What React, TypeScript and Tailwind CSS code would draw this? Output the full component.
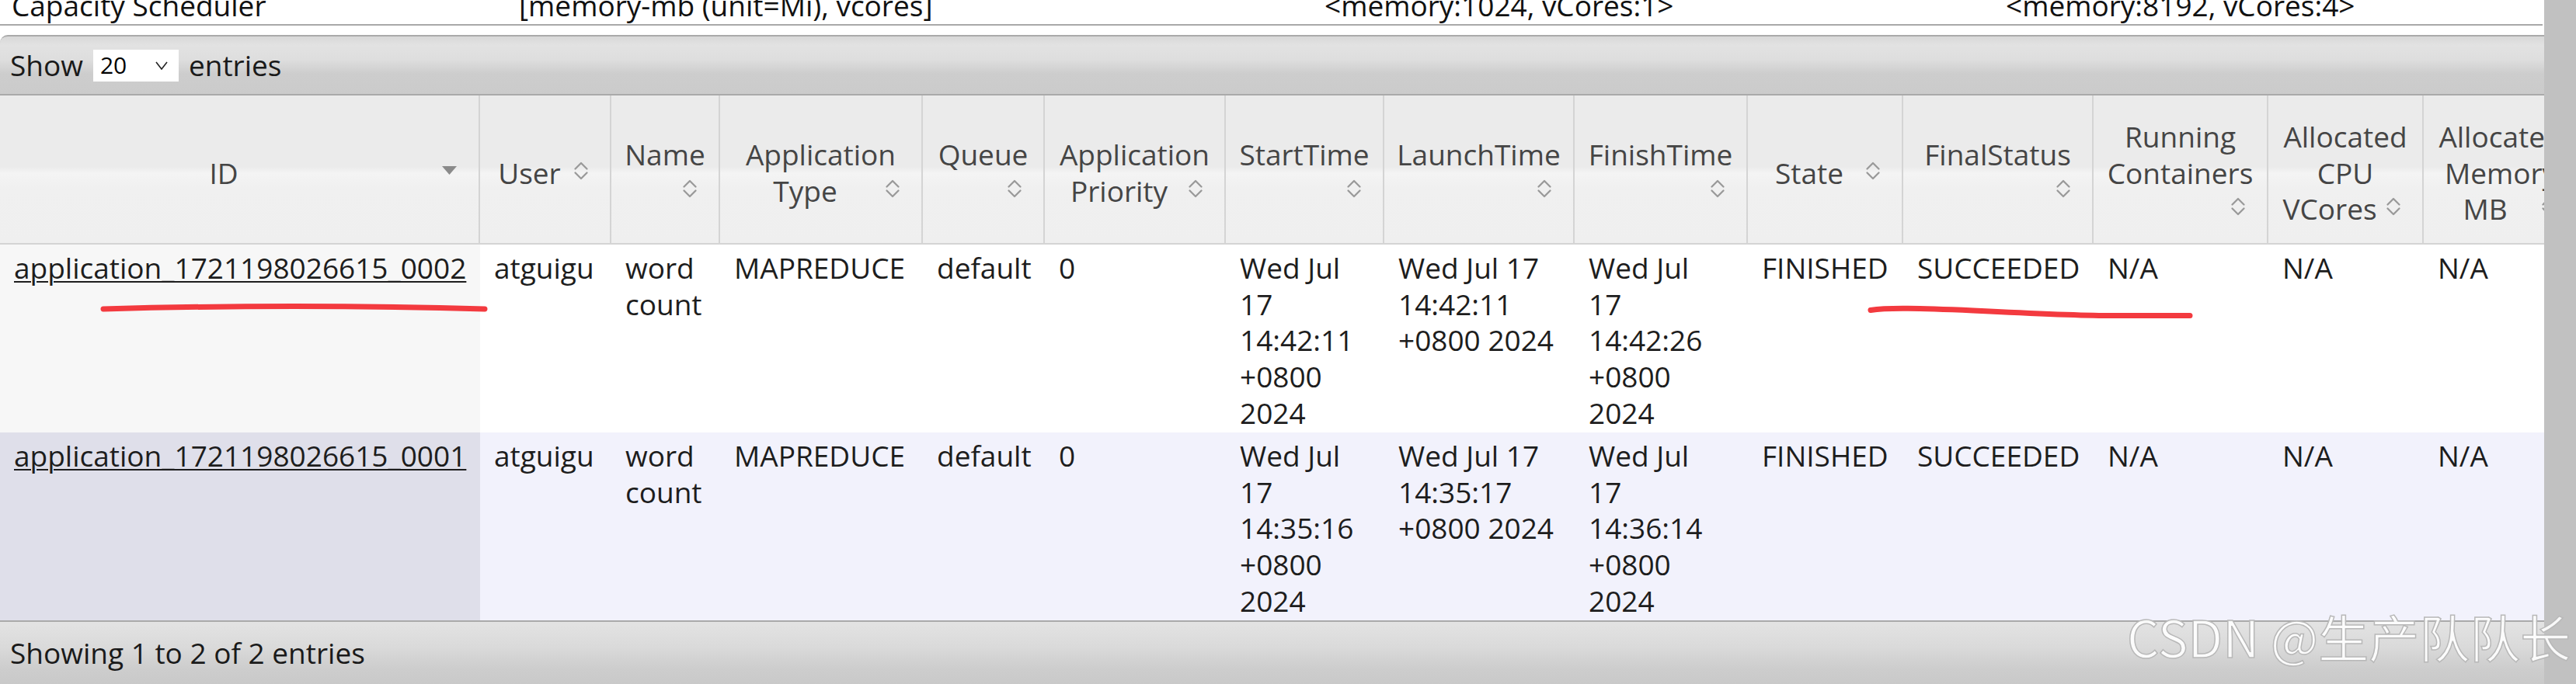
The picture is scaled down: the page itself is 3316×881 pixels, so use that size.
import React from "react";

type HeaderDef = { lines: string[]; mode: "inline" | "below"; icon: "tri" | "carets" };

const headers: HeaderDef[] = [
  { lines: ["ID"], mode: "inline", icon: "tri" },
  { lines: ["User"], mode: "inline", icon: "carets" },
  { lines: ["Name"], mode: "below", icon: "carets" },
  { lines: ["Application", "Type"], mode: "inline", icon: "carets" },
  { lines: ["Queue"], mode: "below", icon: "carets" },
  { lines: ["Application", "Priority"], mode: "inline", icon: "carets" },
  { lines: ["StartTime"], mode: "below", icon: "carets" },
  { lines: ["LaunchTime"], mode: "below", icon: "carets" },
  { lines: ["FinishTime"], mode: "below", icon: "carets" },
  { lines: ["State"], mode: "inline", icon: "carets" },
  { lines: ["FinalStatus"], mode: "below", icon: "carets" },
  { lines: ["Running", "Containers"], mode: "below", icon: "carets" },
  { lines: ["Allocated", "CPU", "VCores"], mode: "inline", icon: "carets" },
  { lines: ["Allocated", "Memory", "MB"], mode: "inline", icon: "carets" },
];

const rows: string[][][] = [
  [
    ["application_1721198026615_0002"],
    ["atguigu"],
    ["word", "count"],
    ["MAPREDUCE"],
    ["default"],
    ["0"],
    ["Wed Jul", "17", "14:42:11", "+0800", "2024"],
    ["Wed Jul 17", "14:42:11", "+0800 2024"],
    ["Wed Jul", "17", "14:42:26", "+0800", "2024"],
    ["FINISHED"],
    ["SUCCEEDED"],
    ["N/A"],
    ["N/A"],
    ["N/A"],
  ],
  [
    ["application_1721198026615_0001"],
    ["atguigu"],
    ["word", "count"],
    ["MAPREDUCE"],
    ["default"],
    ["0"],
    ["Wed Jul", "17", "14:35:16", "+0800", "2024"],
    ["Wed Jul 17", "14:35:17", "+0800 2024"],
    ["Wed Jul", "17", "14:36:14", "+0800", "2024"],
    ["FINISHED"],
    ["SUCCEEDED"],
    ["N/A"],
    ["N/A"],
    ["N/A"],
  ],
];

function Carets() {
  return (
    <svg width="20" height="26" viewBox="0 0 20 26" fill="none" stroke="#9a9a9a" strokeWidth="2.3" strokeLinecap="round" strokeLinejoin="round">
      <path d="M2.5 10.5L10 3L17.5 10.5" />
      <path d="M2.5 15.5L10 23L17.5 15.5" />
    </svg>
  );
}

function Tri() {
  return (
    <svg width="19" height="11" viewBox="0 0 19 11">
      <path d="M0 0H19L9.5 11Z" fill="#8a8a8a" />
    </svg>
  );
}

function Icon({ kind }: { kind: "tri" | "carets" }) {
  return kind === "tri" ? (
    <span className="block w-[40px] shrink-0 pl-[3px] pt-[14px]">
      <Tri />
    </span>
  ) : (
    <span className="block w-[40px] shrink-0 pl-[3px] pt-[7px]">
      <Carets />
    </span>
  );
}

function HeaderCell({ h }: { h: HeaderDef }) {
  return (
    <div className="flex h-[192px] flex-col justify-center border-b-2 border-r-2 border-[#d4d4d4] bg-[linear-gradient(to_bottom,#ebebeb_0px,#ebebeb_92px,#f4f4f4_100px,#f0f0f0_118px,#efefef_100%)] px-[10px] pt-[10px] text-[#454545]">
      {h.lines.map((l, i) =>
        i === h.lines.length - 1 && h.mode === "inline" ? (
          <div key={i} className="flex h-[46.7px]">
            <span className="flex-1 whitespace-nowrap text-center">{l}</span>
            <Icon kind={h.icon} />
          </div>
        ) : (
          <div key={i} className="h-[46.7px] whitespace-nowrap text-center">
            {l}
          </div>
        )
      )}
      {h.mode === "below" && (
        <div className="flex h-[46.7px] justify-end">
          <Icon kind={h.icon} />
        </div>
      )}
    </div>
  );
}

export default function App() {
  return (
    <div className="relative flex h-[881px] w-[3316px] overflow-hidden bg-white font-['Open_Sans',sans-serif] text-[37px] leading-[46.7px] text-[#1d1d1d]">
      <div className="w-[3275px] shrink-0 overflow-hidden">
        <div className="w-[3320px]">
          {/* partially scrolled-off scheduler row */}
          <div className="h-[33px] w-[3273px] overflow-hidden border-b-2 border-[#a9a9a9]">
            <div className="-mt-[16px] grid grid-cols-[652px_1037px_877px_1fr] text-[#111]">
              <div className="whitespace-nowrap pl-[15px]">Capacity Scheduler</div>
              <div className="whitespace-nowrap pl-[16px]">[memory-mb (unit=Mi), vcores]</div>
              <div className="whitespace-nowrap pl-[16px]">&lt;memory:1024, vCores:1&gt;</div>
              <div className="whitespace-nowrap pl-[16px]">&lt;memory:8192, vCores:4&gt;</div>
            </div>
          </div>

          {/* toolbar */}
          <div className="mt-[12px] flex h-[78px] items-center rounded-tl-[10px] border-b-2 border-t-2 border-[#aaaaaa] bg-[linear-gradient(to_bottom,#d8d8d8_0%,#e2e2e2_15%,#dedede_40%,#cdcdcd_65%,#cbcbcb_100%)] pl-[13px] text-[#1a1a1a]">
            <span>Show</span>
            <div className="ml-[13px] flex h-[41px] w-[110px] items-center bg-white pl-[9px] text-[30px] text-black">
              <span>20</span>
              <svg className="ml-auto mr-[14px]" width="16" height="11" viewBox="0 0 16 11" fill="none" stroke="#222" strokeWidth="1.6">
                <path d="M1 1L8 10L15 1" />
              </svg>
            </div>
            <span className="ml-[13px]">entries</span>
          </div>

          {/* table */}
          <div className="grid grid-cols-[618px_169px_140px_261px_157px_233px_204px_245px_223px_200px_245px_225px_200px_200px]">
            {headers.map((h, i) => (
              <HeaderCell key={i} h={h} />
            ))}
            {rows.map((r, ri) =>
              r.map((cell, ci) => {
                const bg =
                  ri === 0
                    ? ci === 0
                      ? "bg-[#f7f7f7]"
                      : "bg-white"
                    : ci === 0
                    ? "bg-[#dfdfea]"
                    : "bg-[#f2f2fc]";
                return (
                  <div key={`${ri}-${ci}`} className={`h-[242px] px-[18px] pt-[7px] ${bg}`}>
                    {cell.map((l, li) =>
                      ci === 0 ? (
                        <div key={li} className="whitespace-nowrap">
                          <a className="text-[#1d1d1d] underline decoration-[2px] underline-offset-[3px]">{l}</a>
                        </div>
                      ) : (
                        <div key={li} className="whitespace-nowrap">
                          {l}
                        </div>
                      )
                    )}
                  </div>
                );
              })
            )}
          </div>

          {/* footer */}
          <div className="flex h-[82px] items-center border-t-2 border-[#aaaaaa] bg-[linear-gradient(to_bottom,#e3e3e3_0%,#dadada_40%,#cdcdcd_75%,#c9c9c9_100%)] pl-[13px] text-[#1a1a1a]">
            Showing 1 to 2 of 2 entries
          </div>
        </div>
      </div>

      {/* scrollbar */}
      <div className="w-[41px] shrink-0 bg-[#c1c1c1]" />

      {/* red pen annotations */}
      <svg className="pointer-events-none absolute left-0 top-0" width="3316" height="881" viewBox="0 0 3316 881" fill="none">
        <path d="M133 398 Q 378 391 624 398" stroke="#f33a3f" strokeWidth="7" strokeLinecap="round" />
        <path d="M2408 399.5 C 2430 396, 2470 397, 2540 400 C 2620 404, 2680 407, 2720 406.5 L 2819 406.5" stroke="#f33a3f" strokeWidth="7" strokeLinecap="round" />
      </svg>

      {/* watermark */}
      <div className="pointer-events-none absolute left-[2738px] top-[787px] whitespace-nowrap font-['Noto_Sans_CJK_SC',sans-serif] text-[65px] leading-[65px] text-white/90 [-webkit-text-stroke:1.5px_#b8b8b8]">
        CSDN @生产队队长
      </div>
    </div>
  );
}
